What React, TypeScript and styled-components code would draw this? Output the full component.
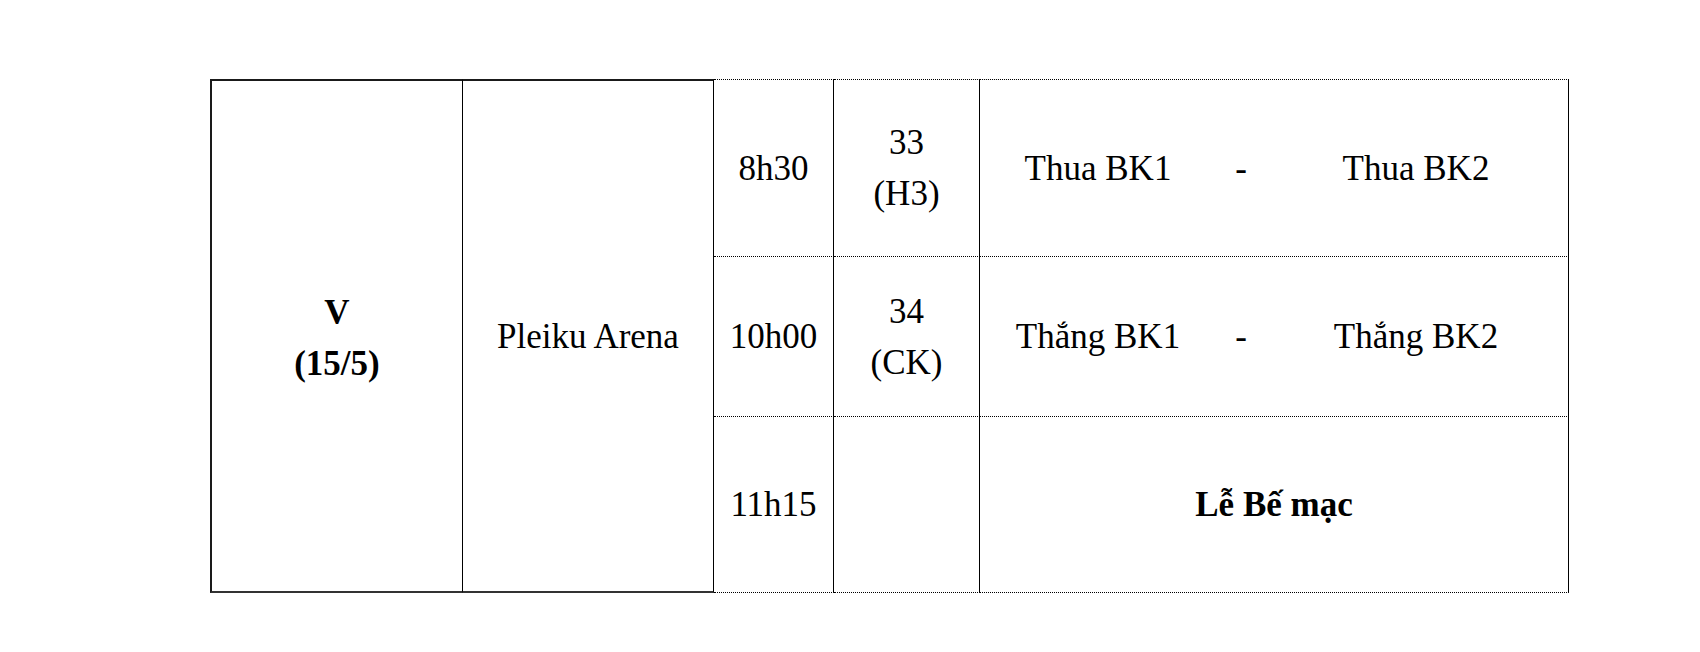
import styled, { createGlobalStyle } from 'styled-components';

const GlobalStyle = createGlobalStyle`
  html, body {
    margin: 0;
    padding: 0;
    background: #ffffff;
  }
  body {
    font-family: "Liberation Serif", "Times New Roman", serif;
    color: #000;
  }
`;

interface Match {
  time: string;
  number?: string;
  stage?: string;
  home?: string;
  away?: string;
  title?: string;
}

const matches: Match[] = [
  { time: '8h30', number: '33', stage: '(H3)', home: 'Thua BK1', away: 'Thua BK2' },
  { time: '10h00', number: '34', stage: '(CK)', home: 'Thắng BK1', away: 'Thắng BK2' },
  { time: '11h15', title: 'Lễ Bế mạc' },
];

const ROW_HEIGHTS = [178, 160, 176];

export default function App() {
  return (
    <>
      <GlobalStyle />
      <Page>
        <Schedule>
          <DayCell $rows={matches.length}>
            <strong>V</strong>
            <strong>(15/5)</strong>
          </DayCell>
          <VenueCell $rows={matches.length}>Pleiku Arena</VenueCell>
          {matches.map((m, i) => (
            <MatchRow key={m.time} m={m} first={i === 0} row={i + 1} />
          ))}
        </Schedule>
      </Page>
    </>
  );
}

function MatchRow({ m, first, row }: { m: Match; first: boolean; row: number }) {
  return (
    <>
      <SlotCell $first={first} $row={row} $col={3}>{m.time}</SlotCell>
      <SlotCell $first={first} $row={row} $col={4}>
        {m.number && (
          <>
            <span>{m.number}</span>
            <span>{m.stage}</span>
          </>
        )}
      </SlotCell>
      <SlotCell $first={first} $row={row} $col={5} $wide>
        {m.title ? (
          <Ceremony>{m.title}</Ceremony>
        ) : (
          <Fixture>
            <Team>{m.home}</Team>
            <Dash>-</Dash>
            <Team>{m.away}</Team>
          </Fixture>
        )}
      </SlotCell>
    </>
  );
}

// ─── Styles ───────────────────────────────────────────────────────────────

const Page = styled.div`
  padding: 79px 0 0 210px;
  height: 652px;
  box-sizing: border-box;
`;

const Schedule = styled.div`
  display: grid;
  grid-template-columns: 253px 251px 120px 146px 589px;
  grid-template-rows: ${ROW_HEIGHTS.map((h) => `${h}px`).join(' ')};
  font-size: 35px;
  line-height: 51px;
`;

const Cell = styled.div`
  box-sizing: border-box;
  display: flex;
  flex-direction: column;
  align-items: center;
  justify-content: center;
  text-align: center;
  border-right: 1px solid #000;
`;

const DayCell = styled(Cell)<{ $rows: number }>`
  grid-column: 1;
  grid-row: 1 / ${({ $rows }) => $rows + 1};
  border-left: 2px solid #1a1a1a;
  border-top: 2px solid #1a1a1a;
  border-bottom: 2px solid #333;
  font-weight: bold;
  padding-top: 4px;
`;

const VenueCell = styled(Cell)<{ $rows: number }>`
  grid-column: 2;
  grid-row: 1 / ${({ $rows }) => $rows + 1};
  border-top: 2px solid #1a1a1a;
  border-bottom: 2px solid #333;
`;

const SlotCell = styled(Cell)<{ $first: boolean; $row: number; $col: number; $wide?: boolean }>`
  grid-column: ${({ $col }) => $col};
  grid-row: ${({ $row }) => $row};
  border-top: ${({ $first }) => ($first ? '1px dotted #000' : 'none')};
  border-bottom: 1px dotted #000;
  align-items: ${({ $wide }) => ($wide ? 'stretch' : 'center')};
`;

const Fixture = styled.div`
  display: grid;
  grid-template-columns: 236px 50px 300px;
  align-items: center;
`;

const Team = styled.span`
  text-align: center;
  white-space: nowrap;
`;

const Dash = styled.span`
  text-align: center;
`;

const Ceremony = styled.strong`
  text-align: center;
`;
